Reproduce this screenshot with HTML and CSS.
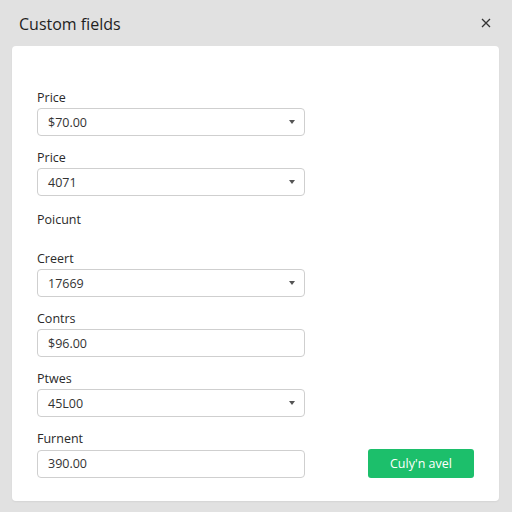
FILE: index.html
```html
<!DOCTYPE html>
<html>
  <head>
    <title>Custom fields</title>
    <meta charset="UTF-8">
    <meta name="viewport" content="width=device-width, initial-scale=1.0">
    <link rel="stylesheet" href="styles.css">
  </head>
  <body>

<!-- HEADER -->
<div class="header">
<p class="title">Custom fields</p>
<svg class="close" width="10" height="10" viewBox="0 0 10 10"><path d="M1 1 L9 9 M9 1 L1 9" stroke="#333" stroke-width="1.3" fill="none"/></svg>
</div>

<!-- FELDER -->
<div class="card">

<div class="field">
<p class="label">Price</p>
<div class="input select">$70.00<span class="caret"></span></div>
</div>

<div class="field">
<p class="label">Price</p>
<div class="input select">4071<span class="caret"></span></div>
</div>

<div class="field empty">
<p class="label">Poicunt</p>
</div>

<div class="field">
<p class="label">Creert</p>
<div class="input select">17669<span class="caret"></span></div>
</div>

<div class="field">
<p class="label">Contrs</p>
<div class="input">$96.00</div>
</div>

<div class="field">
<p class="label">Ptwes</p>
<div class="input select">45L00<span class="caret"></span></div>
</div>

<div class="field last">
<p class="label">Furnent</p>
<div class="row">
<div class="input">390.00</div>
<button class="save">Culy'n avel</button>
</div>
</div>

</div>

  </body>
</html>
```

FILE: styles.css
```css
body{
margin: 0;
background-color: #e1e1e1;
font-family: "Open Sans", "Noto Sans", sans-serif;
color: #222;
}

p{
margin: 0;
}

.header{
height: 46px;
display: flex;
align-items: center;
justify-content: space-between;
padding: 0 21px 0 19px;
box-sizing: border-box;
}

.title{
font-size: 16px;
color: #1e1e1e;
margin-top: 1px;
}

.card{
background-color: white;
margin: 0 13px 12px 12px;
border-radius: 4px;
padding: 43px 25px 23px 25px;
box-shadow: 0 1px 2px rgba(0,0,0,0.06);
}

.field{
margin-bottom: 13px;
}

.field.empty{
height: 26px;
padding-top: 2px;
}

.field.last{
margin-bottom: 0px;
}

.label{
font-size: 12.5px;
line-height: 18px;
height: 18px;
margin-bottom: 1px;
color: #2a2a2a;
}

.input{
width: 268px;
height: 28px;
box-sizing: border-box;
border: 1px solid #cfcfcf;
border-radius: 4px;
padding: 0 9px 0 10px;
display: flex;
align-items: center;
justify-content: space-between;
font-size: 12.5px;
color: #333;
}

.caret{
width: 0;
height: 0;
border-left: 3.5px solid transparent;
border-right: 3.5px solid transparent;
border-top: 4.5px solid #555;
}

.row{
display: flex;
align-items: center;
justify-content: space-between;
}

.save{
width: 106px;
height: 29px;
background-color: #1cbf6b;
border: none;
border-radius: 3px;
color: white;
font-family: "Open Sans", "Noto Sans", sans-serif;
font-size: 12.5px;
}
```
